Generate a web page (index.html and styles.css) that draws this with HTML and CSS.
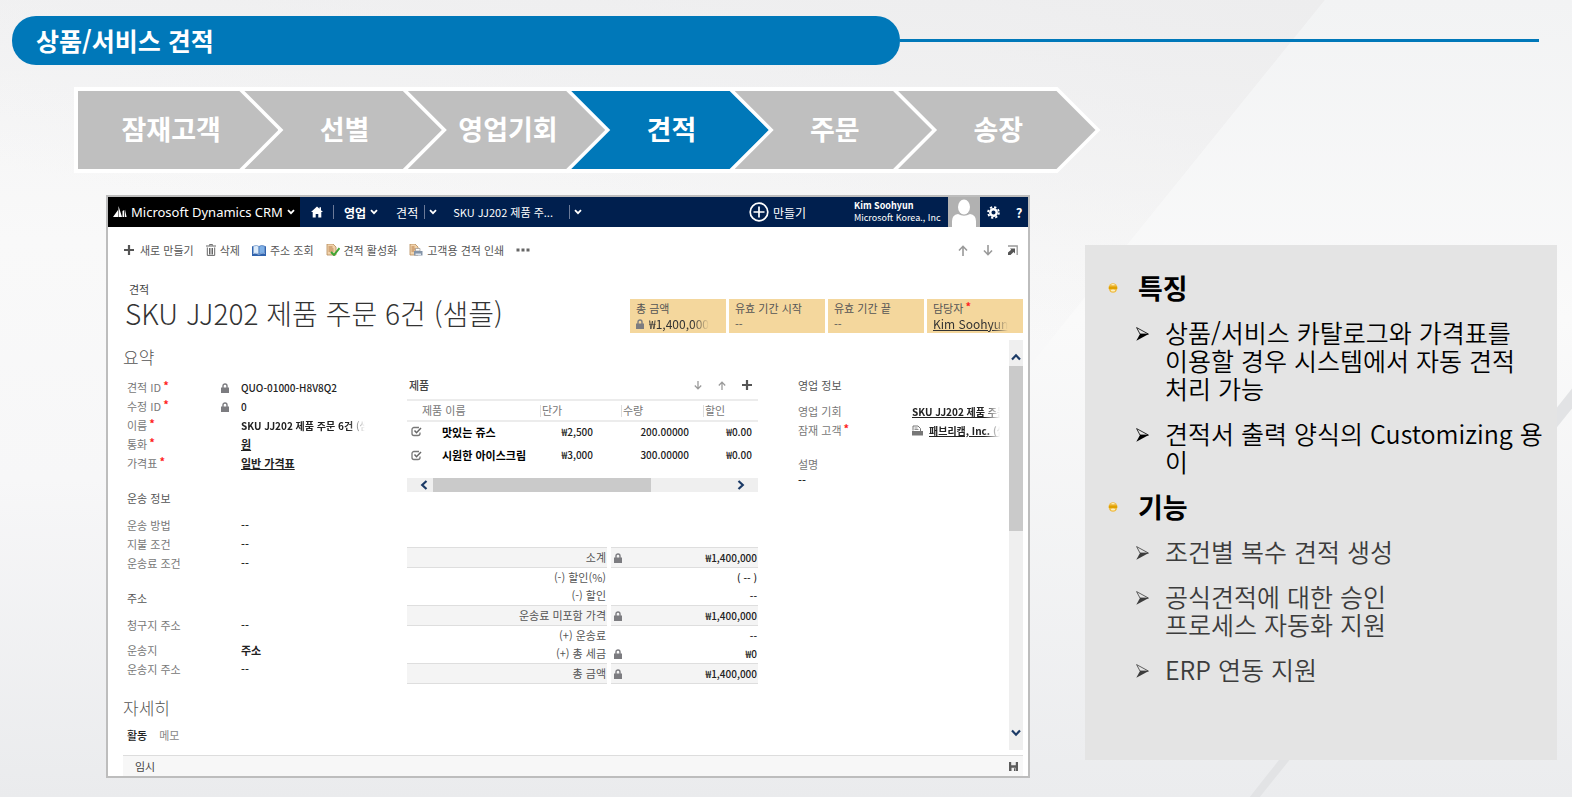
FILE: index.html
```html
<!DOCTYPE html>
<html lang="ko">
<head>
<meta charset="utf-8">
<title>상품/서비스 견적</title>
<link rel="stylesheet" href="styles.css">
</head>
<body>
<svg class="symbols" aria-hidden="true">
  <symbol id="chev" viewBox="0 0 8 6"><path d="M1 1.2 4 4.2 7 1.2" fill="none" stroke="currentColor" stroke-width="1.8"/></symbol>
  <symbol id="lock" viewBox="0 0 8 10"><path d="M2 5V3a2 2 0 0 1 4 0v2" fill="none" stroke="#7c7c80" stroke-width="1.4"/><path d="M0 4.5h8V10H0z" fill="#7c7c80"/></symbol>
  <symbol id="plus" viewBox="0 0 10 10"><path d="M5 0v10M0 5h10" stroke="#555" stroke-width="2.2"/></symbol>
  <symbol id="up" viewBox="0 0 10 11"><path d="M5 11V1.5M1 5.5 5 1.3 9 5.5" fill="none" stroke="currentColor" stroke-width="1.6"/></symbol>
  <symbol id="down" viewBox="0 0 10 11"><path d="M5 0v9.5M1 5.500 5 9.700 9 5.500" fill="none" stroke="currentColor" stroke-width="1.6"/></symbol>
  <symbol id="check" viewBox="0 0 11 11"><path d="M8 1.500H3A2 2 0 0 0 1 3.500v4a2 2 0 0 0 2 2h4a2 2 0 0 0 2-2V6.500" fill="none" stroke="#777" stroke-width="1.300"/><path d="M3.500 4.500 5.500 6.700 10 2" fill="none" stroke="#666" stroke-width="1.500"/></symbol>
  <symbol id="arrow" viewBox="0 0 13 14"><path d="M.6.6 12.400 7H4z" fill="none" stroke="currentColor" stroke-width=".8"/><path d="M4 7h8.800L.3 13.700z" fill="currentColor"/></symbol>
  <symbol id="dot" viewBox="0 0 10 10"><ellipse cx="5" cy="5" rx="4.300" ry="4.800" fill="#efbc45"/><path d="M.8 3.500h8.400v2.500H.8z" fill="#e0a100"/><ellipse cx="5" cy="7.600" rx="2.200" ry="1" fill="#fdf0bd"/><ellipse cx="5" cy="1.700" rx="1.800" ry=".6" fill="#fff0bb"/></symbol>
</svg>
<svg class="backdrop" viewBox="0 0 1572 797" preserveAspectRatio="none" aria-hidden="true">
  <defs>
    <linearGradient id="g1" x1="0" y1="0" x2="0" y2="1"><stop offset="0" stop-color="#f3f3f4"/><stop offset=".3" stop-color="#f9f9f9"/><stop offset=".6" stop-color="#f7f7f8"/><stop offset="1" stop-color="#eaebed"/></linearGradient>
    <linearGradient id="g2" x1=".3" y1="1" x2="1" y2="0"><stop offset=".2" stop-color="#ededee" stop-opacity="0"/><stop offset="1" stop-color="#ededee"/></linearGradient>
    <linearGradient id="g3" x1="0" y1="0" x2="0" y2="1"><stop offset="0" stop-color="#f2f3f4"/><stop offset=".4" stop-color="#fafafa"/><stop offset="1" stop-color="#ebecee"/></linearGradient>
  </defs>
  <path d="M0 0H1572V797H0z" fill="url(#g1)"/>
  <path d="M0 0H1325L1050 340H0z" fill="url(#g2)"/>
  <path d="M1325 0H1572V797H1030V365z" fill="url(#g3)"/>
  <path d="M1572 388V408L1259 797H1249z" fill="#e2e3e5"/>
</svg>

<header class="banner">
  <h1 class="banner-title">상품/서비스 견적</h1>
  <span class="banner-line"></span>
</header>

<ol class="steps">
  <li class="step">잠재고객</li>
  <li class="step">선별</li>
  <li class="step">영업기회</li>
  <li class="step step-on" aria-current="step">견적</li>
  <li class="step">주문</li>
  <li class="step">송장</li>
</ol>

<div class="stage">
  <main class="crm">
    <nav class="nav">
      <a class="brand" href="#">
        <svg class="i-logo" viewBox="0 0 14 12"><path d="M0 11 5 4v7zM5.500 11V0L9 11zM9.500 11V5l1.800-1V11zM12 11V3.500l1.600 7.500z" fill="#fff"/></svg>
        Microsoft Dynamics CRM
        <svg class="i-chev"><use href="#chev"/></svg>
      </a>
      <a class="home" href="#" aria-label="홈"><svg class="i-12" viewBox="0 0 12 12"><path d="M6 .5 0 6h1.700v5.500h3V8h2.600v3.500h3V6H12L10 4.200V1.200H8.500v1.600z" fill="#fff"/></svg></a>
      <span class="sep"></span>
      <a class="area" href="#">영업 <svg class="i-chev"><use href="#chev"/></svg></a>
      <a class="crumb" href="#">견적</a>
      <span class="sep"></span>
      <button class="nav-btn" aria-label="견적 메뉴"><svg class="i-chev"><use href="#chev"/></svg></button>
      <a class="crumb record" href="#">SKU JJ202 제품 주...</a>
      <span class="sep"></span>
      <button class="nav-btn" aria-label="레코드 메뉴"><svg class="i-chev"><use href="#chev"/></svg></button>
      <button class="create"><svg class="i-20" viewBox="0 0 20 20"><circle cx="10" cy="10" r="8.800" fill="none" stroke="#fff" stroke-width="1.700"/><path d="M10 4.500v11M4.500 10h11" stroke="#fff" stroke-width="1.700"/></svg>만들기</button>
      <div class="user"><strong>Kim Soohyun</strong><span>Microsoft Korea., Inc</span></div>
      <svg class="avatar" viewBox="0 0 32 30"><path d="M0 0h32v30H0z" fill="#b1b1b1"/><ellipse cx="16" cy="10" rx="6" ry="7.500" fill="#fff"/><path d="M4 30V24q0-6 6-7 6 3.500 12 0 6 1 6 7v6z" fill="#fff"/></svg>
      <button class="nav-btn gear" aria-label="설정"><svg class="i-13" viewBox="0 0 14 14"><circle cx="7" cy="7" r="5.800" fill="none" stroke="#fff" stroke-width="2" stroke-dasharray="2.400 2.155"/><circle cx="7" cy="7" r="3.500" fill="none" stroke="#fff" stroke-width="2.600"/></svg></button>
      <button class="nav-btn help" aria-label="도움말">?</button>
    </nav>

    <div class="toolbar">
      <button class="tool tool-new"><svg class="i-10"><use href="#plus"/></svg>새로 만들기</button>
      <button class="tool"><svg class="i-trash" viewBox="0 0 10 12"><path d="M0 2h10M3.500 1.500V.6h3v.9M1.300 3.500v7.900h7.400V3.500M3.500 4v6.500M5 4v6.500M6.500 4v6.500" fill="none" stroke="#666" stroke-width="1"/></svg>삭제</button>
      <button class="tool"><svg class="i-book" viewBox="0 0 14 11"><path d="M0 1.500 1 1v8q3-1 6 .8Q10 8 13 9V1l1 .5V11H0z" fill="#2f62ad"/><path d="M1.500 1Q5-.3 7 1.500v7.800Q4.500 7.700 1.500 8.500z" fill="#dcebfa" stroke="#4a79b8" stroke-width=".6"/><path d="M12.500 1Q9-.3 7 1.500v7.800q2.500-1.600 5.500-.8z" fill="#7fb0e6" stroke="#2f62ad" stroke-width=".6"/></svg>주소 조회</button>
      <button class="tool"><svg class="i-doc" viewBox="0 0 14 12"><path d="M1 0h6l3 3v8H1z" fill="#f1d3ac" stroke="#b58a58" stroke-width=".8"/><path d="M2.500 3h4M2.500 5h5M2.500 7h5" stroke="#b0703c" stroke-width=".9"/><path d="M5 8l3 3 5.500-7" fill="none" stroke="#3fa535" stroke-width="2"/></svg>견적 활성화</button>
      <button class="tool"><svg class="i-doc" viewBox="0 0 14 12"><path d="M1 0h5l3 3v8H1z" fill="#f1d3ac" stroke="#b58a58" stroke-width=".8"/><path d="M2.500 3h3M2.500 5h4M2.500 7h3" stroke="#b0703c" stroke-width=".9"/><path d="M6.500 4.500h4.500V7H6.500z" fill="#fff" stroke="#888" stroke-width=".6"/><path d="M5 7h8.500v4.500H5z" fill="#8494a8"/><path d="M6.500 9.500h5.500v1.500H6.500z" fill="#dfe6ee"/></svg>고객용 견적 인쇄</button>
      <button class="tool" aria-label="추가 명령"><svg class="i-dots" viewBox="0 0 14 4"><path d="M.5.500h3v3h-3zM5.500.500h3v3h-3zM10.500.500h3v3h-3z" fill="#666"/></svg></button>
      <div class="pager">
        <button class="tool" aria-label="이전"><svg class="i-arrow"><use href="#up"/></svg></button>
        <button class="tool" aria-label="다음"><svg class="i-arrow"><use href="#down"/></svg></button>
        <button class="tool" aria-label="새 창"><svg class="i-10" viewBox="0 0 10 10"><path d="M0 1h9.200v9" fill="none" stroke="#999" stroke-width="1.300"/><path d="M2 3.500h5v5L5.600 7.100 2.500 10H0V7.500l3.200-2.700z" fill="#555"/></svg></button>
      </div>
    </div>

    <header class="record-head">
      <div>
        <p class="kind">견적</p>
        <h2 class="record-title">SKU JJ202 제품 주문 6건 (샘플)</h2>
      </div>
      <dl class="cards">
        <div class="card"><dt>총 금액</dt><dd class="strong"><svg class="i-lock"><use href="#lock"/></svg><span class="fade">₩1,400,000</span></dd></div>
        <div class="card"><dt>유효 기간 시작</dt><dd>--</dd></div>
        <div class="card"><dt>유효 기간 끝</dt><dd>--</dd></div>
        <div class="card"><dt>담당자<i class="req">*</i></dt><dd class="strong"><a class="fade" href="#">Kim Soohyun</a></dd></div>
      </dl>
    </header>

    <div class="scroller">
      <div class="form">
        <h3 class="section">요약</h3>
        <div class="columns">
          <div class="col-info">
            <dl class="fields">
              <div class="field"><dt>견적 ID<i class="req">*</i></dt><dd class="latin"><svg class="i-lock"><use href="#lock"/></svg>QUO-01000-H8V8Q2</dd></div>
              <div class="field"><dt>수정 ID<i class="req">*</i></dt><dd class="latin"><svg class="i-lock"><use href="#lock"/></svg>0</dd></div>
              <div class="field"><dt>이름<i class="req">*</i></dt><dd class="open fade latin"><b>SKU JJ202 제품 주문 6건</b> (샘플)</dd></div>
              <div class="field"><dt>통화<i class="req">*</i></dt><dd class="open"><a href="#">원</a></dd></div>
              <div class="field"><dt>가격표<i class="req">*</i></dt><dd class="open"><a href="#">일반 가격표</a></dd></div>
            </dl>
            <h4 class="group">운송 정보</h4>
            <dl class="fields">
              <div class="field"><dt>운송 방법</dt><dd class="open">--</dd></div>
              <div class="field"><dt>지불 조건</dt><dd class="open">--</dd></div>
              <div class="field"><dt>운송료 조건</dt><dd class="open">--</dd></div>
            </dl>
            <h4 class="group">주소</h4>
            <dl class="fields">
              <div class="field spaced"><dt>청구지 주소</dt><dd class="open">--</dd></div>
              <div class="field"><dt>운송지</dt><dd class="open"><b>주소</b></dd></div>
              <div class="field"><dt>운송지 주소</dt><dd class="open">--</dd></div>
            </dl>
          </div>

          <div class="col-products">
            <div class="grid-head">
              <h4>제품</h4>
              <button class="tool" aria-label="아래로"><svg class="i-sort"><use href="#down"/></svg></button>
              <button class="tool" aria-label="위로"><svg class="i-sort"><use href="#up"/></svg></button>
              <button class="tool" aria-label="제품 추가"><svg class="i-10"><use href="#plus"/></svg></button>
            </div>
            <table class="products">
              <colgroup><col class="c-check"><col class="c-name"><col class="c-price"><col class="c-qty"><col class="c-disc"></colgroup>
              <thead><tr><th colspan="2">제품 이름</th><th class="bar">단가</th><th class="bar">수량</th><th class="bar">할인</th></tr></thead>
              <tbody>
                <tr><td><svg class="i-11"><use href="#check"/></svg></td><td class="name">맛있는 쥬스</td><td>₩2,500</td><td>200.00000</td><td>₩0.00</td></tr>
                <tr><td><svg class="i-11"><use href="#check"/></svg></td><td class="name">시원한 아이스크림</td><td>₩3,000</td><td>300.00000</td><td>₩0.00</td></tr>
              </tbody>
            </table>
            <div class="hscroll">
              <svg class="i-side" viewBox="0 0 8 10"><path d="M6.500 1 2.200 5l4.300 4" fill="none" stroke="#1b3a66" stroke-width="2.200"/></svg>
              <span class="hthumb"></span>
              <svg class="i-side" viewBox="0 0 8 10"><path d="M1.500 1l4.300 4-4.300 4" fill="none" stroke="#1b3a66" stroke-width="2.200"/></svg>
            </div>
            <table class="totals">
              <colgroup><col class="t-label"><col class="t-gap"><col class="t-value"></colgroup>
              <tbody>
                <tr class="shade"><th>소계</th><td class="gap"></td><td><span class="amount"><svg class="i-lock"><use href="#lock"/></svg>₩1,400,000</span></td></tr>
                <tr><th>(-) 할인(%)</th><td class="gap"></td><td>( -- )</td></tr>
                <tr><th>(-) 할인</th><td class="gap"></td><td>--</td></tr>
                <tr class="shade"><th>운송료 미포함 가격</th><td class="gap"></td><td><span class="amount"><svg class="i-lock"><use href="#lock"/></svg>₩1,400,000</span></td></tr>
                <tr><th>(+) 운송료</th><td class="gap"></td><td>--</td></tr>
                <tr><th>(+) 총 세금</th><td class="gap"></td><td><span class="amount"><svg class="i-lock"><use href="#lock"/></svg>₩0</span></td></tr>
                <tr class="shade"><th>총 금액</th><td class="gap"></td><td><span class="amount"><svg class="i-lock"><use href="#lock"/></svg>₩1,400,000</span></td></tr>
              </tbody>
            </table>
          </div>

          <div class="col-sales">
            <h4 class="group first">영업 정보</h4>
            <dl class="fields">
              <div class="field"><dt>영업 기회</dt><dd class="open fade latin"><a href="#">SKU JJ202 제품 주문 6건</a></dd></div>
              <div class="field"><dt>잠재 고객<i class="req">*</i></dt><dd class="open fade latin"><svg class="i-11" viewBox="0 0 11 10"><path d="M1 5V.500h5L8.500 3v3" fill="none" stroke="#777"/><path d="M2.500 2.500h3M2.500 4h4" stroke="#777" stroke-width=".8"/><path d="M0 5.500h11V10H0z" fill="#777"/></svg><a href="#">패브리캠, Inc. (샘플)</a></dd></div>
            </dl>
            <dl class="note"><dt>설명</dt><dd>--</dd></dl>
          </div>
        </div>
        <h3 class="section detail">자세히</h3>
        <div class="tabs"><button class="tab tab-on">활동</button><button class="tab">메모</button></div>
      </div>
      <div class="vscroll">
        <svg class="i-v" viewBox="0 0 10 8"><path d="M1 6.500 5 2.300l4 4.200" fill="none" stroke="#1b3a66" stroke-width="2.200"/></svg>
        <span class="vthumb"></span>
        <svg class="i-v" viewBox="0 0 10 8"><path d="M1 1.500 5 5.700l4-4.200" fill="none" stroke="#1b3a66" stroke-width="2.200"/></svg>
      </div>
    </div>

    <footer class="status"><span>임시</span><button class="tool" aria-label="저장"><svg class="i-9" viewBox="0 0 9 9"><path d="M0 0h9v9H0z" fill="#5c5c5c"/><path d="M2.200 0h4.600v3.200H2.200zM2.500 5.800h4V9h-4z" fill="#eee"/><path d="M5 6.300h1V9H5z" fill="#5c5c5c"/></svg></button></footer>
  </main>

  <aside class="notes">
    <h2 class="topic"><svg class="i-dot"><use href="#dot"/></svg>특징</h2>
    <ul class="points">
      <li class="point"><svg class="i-point"><use href="#arrow"/></svg><span>상품/서비스 카탈로그와 가격표를<br>이용할 경우 시스템에서 자동 견적<br>처리 가능</span></li>
      <li class="point"><svg class="i-point"><use href="#arrow"/></svg><span>견적서 출력 양식의 Customizing 용<br>이</span></li>
    </ul>
    <h2 class="topic"><svg class="i-dot"><use href="#dot"/></svg>기능</h2>
    <ul class="points soft">
      <li class="point"><svg class="i-point"><use href="#arrow"/></svg><span>조건별 복수 견적 생성</span></li>
      <li class="point"><svg class="i-point"><use href="#arrow"/></svg><span>공식견적에 대한 승인<br>프로세스 자동화 지원</span></li>
      <li class="point"><svg class="i-point"><use href="#arrow"/></svg><span>ERP 연동 지원</span></li>
    </ul>
  </aside>
</div>
</body>
</html>
```
FILE: styles.css
```css
* { box-sizing: border-box; }
body, h1, h2, h3, h4, p, ol, ul, dl, dd { margin: 0; padding: 0; }
body {
  position: relative;
  min-height: 100vh;
  padding-top: 16px;
  background: #f4f4f5;
  font-family: "Noto Sans CJK KR", "Noto Sans", sans-serif;
  font-size: 11px;
  color: #555;
}
ol, ul { list-style: none; }
button { border: 0; padding: 0; background: none; font: inherit; color: inherit; }
a { color: inherit; text-decoration: none; }
svg { display: block; flex: none; }
i { font-style: normal; }
.symbols { position: absolute; width: 0; height: 0; }
.backdrop { position: absolute; top: 0; left: 0; width: 100%; height: 100%; z-index: -1; }

/* icon sizes */
.i-9 { width: 9px; height: 9px; }
.i-10 { width: 10px; height: 10px; }
.i-11 { width: 11px; height: 11px; }
.i-12 { width: 12px; height: 12px; }
.i-13 { width: 13px; height: 13px; }
.i-20 { width: 20px; height: 20px; }
.i-logo { width: 14px; height: 12px; }
.i-chev { width: 8px; height: 6px; }
.i-lock { width: 8px; height: 10px; }
.i-trash { width: 10px; height: 12px; }
.i-book { width: 14px; height: 11px; }
.i-doc { width: 14px; height: 12px; }
.i-dots { width: 14px; height: 4px; }
.i-arrow { width: 10px; height: 11px; }
.i-sort { width: 8px; height: 9px; }
.i-side { width: 8px; height: 10px; }
.i-v { width: 10px; height: 8px; }
.i-dot { width: 10px; height: 10px; }
.i-point { width: 13px; height: 14px; }

/* banner */
.banner { display: grid; grid-template-columns: minmax(0, 888fr) minmax(0, 639fr); align-items: center; padding: 0 33px 0 12px; }
.banner-title {
  padding: 0 24px;
  border-radius: 24px;
  background: #0078b9;
  color: #fff;
  font-size: 25px;
  line-height: 49px;
  font-weight: 700;
}
.banner-line { height: 3px; background: #0078b9; }

/* process steps */
.steps {
  display: grid;
  grid-template-columns: repeat(6, minmax(0, 1fr));
  width: 65.300%;
  margin: 22px 0 0 74px;
  padding: 4px 5px 4px 41px;
  background: #fff;
  clip-path: polygon(0 0, calc(100% - 43px) 0, 100% 50%, calc(100% - 43px) 100%, 0 100%);
}
.step {
  margin-left: -34px;
  padding: 0 0 2px 3px;
  background: #bfbfbf;
  color: #fff;
  font-size: 27px;
  line-height: 76px;
  font-weight: 700;
  text-align: center;
  clip-path: polygon(0 0, calc(100% - 39px) 0, 100% 50%, calc(100% - 39px) 100%, 0 100%, 39px 50%);
}
.step:first-child {
  margin-left: -37px;
  padding: 0 14px 2px 0;
  clip-path: polygon(0 0, calc(100% - 39px) 0, 100% 50%, calc(100% - 39px) 100%, 0 100%);
}
.step-on { background: #0078b9; }

.stage {
  display: grid;
  grid-template-columns: minmax(0, 924fr) minmax(0, 472fr);
  column-gap: 55px;
  align-items: start;
  margin-top: 22px;
  padding: 0 15px 20px 106px;
}

/* CRM window */
.crm { border: 2px solid #bdbdbd; background: #fff; }
.nav { display: flex; align-items: center; height: 30px; background: #001f4e; color: #fff; white-space: nowrap; }
.brand { display: flex; align-items: center; gap: 4px; align-self: stretch; width: 192px; padding-left: 5px; background: #000; font-family: "Noto Sans", sans-serif; font-size: 13px; }
.home { padding: 0 10px 0 11px; }
.sep { width: 1px; height: 14px; background: #6b7a98; }
.area { display: flex; align-items: center; gap: 4px; margin: 0 18px 0 10px; font-size: 12px; font-weight: 700; }
.crumb { margin-right: 6px; font-size: 12px; }
.record { margin: 0 16px; font-size: 11px; }
.nav-btn { padding-left: 4px; }
.create { display: flex; align-items: center; gap: 4px; margin-left: auto; font-size: 12px; }
.user { display: flex; flex-direction: column; width: 94px; margin-left: 48px; font-size: 9px; line-height: 12px; }
.avatar { width: 32px; height: 30px; }
.gear { padding: 0 12px 0 7px; }
.help { width: 14px; padding: 0; margin-right: 2px; font-size: 13px; font-weight: 700; }

.toolbar { display: flex; align-items: center; gap: 12px; height: 46px; padding: 0 10px 0 16px; }
.tool { display: flex; align-items: center; gap: 4px; line-height: 16px; white-space: nowrap; }
.tool-new { gap: 6px; }
.pager { display: flex; align-items: center; gap: 15px; margin-left: auto; color: #999; }

.record-head { display: flex; justify-content: space-between; align-items: flex-end; padding: 8px 5px 0 17px; }
.kind { padding-left: 4px; line-height: 16px; color: #444; }
.record-title { padding-bottom: 4px; font-size: 28px; line-height: 32px; font-weight: 300; color: #333; white-space: nowrap; }
.cards { display: grid; grid-template-columns: repeat(4, 96px); gap: 3px; }
.card { height: 34px; padding: 1px 6px 0; background: #f4d79d; white-space: nowrap; line-height: 16px; }
.card dd { display: flex; align-items: center; gap: 5px; }
.card .strong { font-size: 12px; color: #333; }
.card a { text-decoration: underline; }
.fade { -webkit-mask-image: linear-gradient(to left, transparent, #000 16px); mask-image: linear-gradient(to left, transparent, #000 16px); }
.req { color: #f22; margin-left: 2px; font-weight: 700; line-height: 1; vertical-align: 2px; }

.scroller { display: flex; gap: 9px; margin-top: 7px; padding: 0 5px 0 15px; }
.form { flex: 1; min-width: 0; padding: 5px 0 6px; }
.section { font-size: 17px; line-height: 24px; font-weight: 300; color: #555; }
.columns { display: grid; grid-template-columns: minmax(0, 244fr) minmax(0, 351fr) minmax(0, 202fr); column-gap: 40px; }
.col-info { padding: 9px 2px 0 4px; }
.field { display: grid; grid-template-columns: 94px minmax(0, 1fr); height: 19px; line-height: 19px; white-space: nowrap; color: #222; }
.field dt { color: #777; }
.field dd { display: flex; align-items: center; gap: 12px; font-weight: 500; }
.field .open { display: block; padding-left: 20px; overflow: hidden; }
.field b, .field a { font-weight: 700; }
.field a { text-decoration: underline; }
.field .latin { font-size: 10px; }
.spaced { margin-bottom: 6px; }
.group { margin: 15px 0 8px; font-size: 11px; line-height: 20px; font-weight: 400; color: #555; }

.col-products { padding-top: 6px; }
.grid-head { display: flex; align-items: center; gap: 16px; height: 20px; padding: 0 6px 0 2px; color: #999; }
.grid-head h4 { margin-right: auto; font-size: 11px; font-weight: 500; color: #444; }
.products, .totals { width: 100%; table-layout: fixed; border-collapse: collapse; white-space: nowrap; }
.products { margin-top: 4px; }
.products th { height: 21px; padding: 0 0 0 2px; border: solid #ececec; border-width: 2px 0; line-height: 17px; font-weight: 400; text-align: left; color: #777; }
.products th:first-child { padding-left: 15px; }
.products .bar { background: linear-gradient(#ddd, #ddd) 0 50% / 1px 12px no-repeat; }
.products td { height: 24px; padding: 0 6px 4px 0; line-height: 16px; font-size: 10px; font-weight: 500; text-align: right; color: #222; }
.products td:first-child { padding-left: 4px; }
.products .name { padding: 0 0 4px; font-size: 11px; font-weight: 700; text-align: left; color: #000; }
.c-check { width: 35px; }
.c-name { width: 98px; }
.c-price { width: 81px; }
.c-qty { width: 82px; }
.products td:nth-child(3) { padding-right: 28px; }
.products td:nth-child(4) { padding-right: 14px; }
.hscroll { display: flex; align-items: center; height: 14px; margin: 9px 0 55px; padding: 0 13px; background: #efefef; }
.hthumb { width: 67%; height: 14px; margin: 0 auto 0 5px; background: #cacaca; }

.totals th, .totals td { height: 19px; padding: 0 1px 0 0; line-height: 17px; text-align: right; color: #222; font-weight: 500; }
.totals td { font-size: 10px; }
.totals th { font-weight: 400; color: #555; }
.totals .shade th, .totals .shade td { height: 20px; border: solid #dedede; border-width: 1px 0; background: #f4f4f4; }
.totals .shade .gap { border-color: transparent; background: none; }
.t-label { width: 57%; }
.t-gap { width: 4px; }
.amount { display: flex; align-items: center; justify-content: space-between; padding-left: 3px; }

.first { margin: 6px 0 7px; }
.col-sales .field .open { display: flex; gap: 6px; }
.note { padding-top: 15px; color: #777; }
.note dt { line-height: 18px; }
.note dd { line-height: 14px; color: #222; font-weight: 500; }

.detail { margin-top: 12px; }
.tabs { display: flex; gap: 12px; margin-top: 6px; padding-left: 4px; line-height: 18px; color: #888; }
.tab-on { color: #222; font-weight: 500; }

.vscroll { display: flex; flex-direction: column; align-items: center; width: 14px; padding: 13px 0; background: #efefef; }
.vthumb { width: 14px; height: 43%; margin: 5px 0 auto; background: #cacaca; }

.status { display: flex; align-items: center; justify-content: space-between; height: 21px; margin: 5px 5px 0 15px; padding: 0 5px 0 12px; border-top: 1px solid #ddd; background: #f7f7f7; color: #444; }

/* notes */
.notes { margin-top: 50px; min-height: 515px; padding: 29px 10px 29px 23px; background: #e4e4e4; color: #000; font-size: 25px; line-height: 28px; }
.topic { display: flex; align-items: center; gap: 20px; font-size: 27px; line-height: 28px; font-weight: 700; }
.points { display: grid; gap: 17px; margin: 16px 0 18px; padding-left: 28px; font-weight: 350; white-space: nowrap; }
.point { display: flex; gap: 16px; }
.i-point { margin-top: 9px; }
.soft { color: #3c3c3c; }
```
